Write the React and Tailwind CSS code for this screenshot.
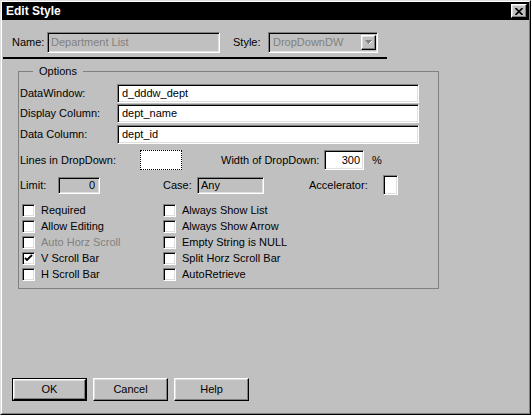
// Edit Style dialog, Win95 look

const sunken =
	'border border-t-[#808080] border-l-[#808080] border-b-white border-r-white shadow-[inset_1px_1px_0_#000,inset_-1px_-1px_0_#dfdfdf]';
const raised =
	'border border-t-white border-l-white border-b-black border-r-black shadow-[inset_-1px_-1px_0_#808080,inset_1px_1px_0_#dfdfdf]';

const leftChecks = [
	{ label: 'Required' },
	{ label: 'Allow Editing' },
	{ label: 'Auto Horz Scroll', disabled: true },
	{ label: 'V Scroll Bar', checked: true },
	{ label: 'H Scroll Bar' },
];

const rightChecks = [
	{ label: 'Always Show List' },
	{ label: 'Always Show Arrow' },
	{ label: 'Empty String is NULL' },
	{ label: 'Split Horz Scroll Bar' },
	{ label: 'AutoRetrieve' },
];

function Check({ label, checked, disabled }) {
	return (
		<div className="flex h-[16px] items-center">
			<div className={`w-[13px] h-[13px] bg-white flex items-center justify-center ${sunken}`}>
				{checked && (
					<svg width="9" height="9" viewBox="0 0 9 9">
						<path d="M1 4 L3 6 L8 1" stroke="#000" strokeWidth="1.8" fill="none" />
					</svg>
				)}
			</div>
			<span className={`ml-[6px] ${disabled ? 'text-[#808080]' : ''}`}>{label}</span>
		</div>
	);
}

function Field({ width, value }) {
	return (
		<div className={`h-[19px] bg-white flex items-center pl-[4px] ${sunken} ${width}`}>
			{value}
		</div>
	);
}

function Button({ children, isDefault }) {
	return (
		<div className={`w-[75px] h-[23px] ${isDefault ? 'border border-black' : ''}`}>
			<div className={`w-full h-full flex items-center justify-center ${raised}`}>{children}</div>
		</div>
	);
}

export default function App() {
	return (
		<div className="w-[531px] h-[415px] border border-t-[#dfdfdf] border-l-[#dfdfdf] border-b-black border-r-black font-['Liberation_Sans',Arial,sans-serif] text-[11px] text-black">
			<div className="w-full h-full bg-[#c0c0c0] border border-t-white border-l-white border-b-[#808080] border-r-[#808080]">
				{/* Title bar */}
				<div className="h-[18px] bg-black flex items-center justify-between">
					<span className="pl-[4px] text-white font-bold text-[12px]">Edit Style</span>
					<div className={`mr-[2px] w-[16px] h-[14px] bg-[#c0c0c0] flex items-center justify-center ${raised}`}>
						<svg width="8" height="7" viewBox="0 0 8 7">
							<path d="M0.5 0 L7.5 7 M7.5 0 L0.5 7" stroke="#000" strokeWidth="1.6" />
						</svg>
					</div>
				</div>

				{/* Name / Style */}
				<div className="mt-[12px] pl-[10px] flex items-center h-[21px]">
					<span className="w-[35px]">Name:</span>
					<div className={`w-[173px] h-[21px] flex items-center pl-[3px] text-[#808080] ${sunken}`}>
						Department List
					</div>
					<span className="ml-[13px] w-[35px]">Style:</span>
					<div className={`w-[110px] h-[21px] flex items-center justify-between pl-[4px] pr-[1px] text-[#808080] ${sunken}`}>
						<span>DropDownDW</span>
						<div className={`w-[15px] h-[15px] flex items-center justify-center ${raised}`}>
							<svg width="7" height="5" viewBox="0 0 7 5">
								<path d="M0 0 H7 L3.5 4 Z" fill="#808080" />
								<path d="M4 4 L7 1" stroke="#fff" strokeWidth="1" />
							</svg>
						</div>
					</div>
				</div>

				<div className="mt-[4px] ml-[1px] w-[384px] h-[2px] bg-black" />

				{/* Options group */}
				<fieldset className="mt-[6px] ml-[16px] w-[421px] h-[224px] border border-[#808080] pl-[1px]">
					<legend className="ml-[13px] px-[6px] leading-[13px]">Options</legend>

					<div className="mt-[6px] flex items-center">
						<span className="w-[97px]">DataWindow:</span>
						<Field width="w-[302px]" value="d_dddw_dept" />
					</div>
					<div className="mt-[1px] flex items-center">
						<span className="w-[97px]">Display Column:</span>
						<Field width="w-[302px]" value="dept_name" />
					</div>
					<div className="mt-[2px] flex items-center">
						<span className="w-[97px]">Data Column:</span>
						<Field width="w-[302px]" value="dept_id" />
					</div>

					<div className="mt-[6px] flex items-center h-[20px]">
						<span className="w-[120px]">Lines in DropDown:</span>
						<div className="w-[42px] h-[20px] bg-white border border-dotted border-black" />
						<span className="ml-[39px] w-[103px] whitespace-nowrap">Width of DropDown:</span>
						<div className={`w-[40px] h-[20px] bg-white flex items-center justify-end pr-[3px] ${sunken}`}>300</div>
						<span className="ml-[8px]">%</span>
					</div>

					<div className="mt-[5px] flex items-center h-[20px]">
						<span className="w-[38px]">Limit:</span>
						<div className={`w-[42px] h-[17px] flex items-center justify-end pr-[4px] ${sunken}`}>0</div>
						<span className="ml-[63px] w-[34px]">Case:</span>
						<div className={`w-[67px] h-[17px] flex items-center pl-[3px] ${sunken}`}>Any</div>
						<span className="ml-[45px] w-[74px]">Accelerator:</span>
						<div className={`w-[15px] h-[20px] bg-white ${sunken}`} />
					</div>

					<div className="mt-[7px] ml-[2px] grid grid-cols-[141px_1fr]">
						<div>
							{leftChecks.map((c) => (
								<Check key={c.label} {...c} />
							))}
						</div>
						<div>
							{rightChecks.map((c) => (
								<Check key={c.label} {...c} />
							))}
						</div>
					</div>
				</fieldset>

				{/* Buttons */}
				<div className="mt-[89px] pl-[10px] flex gap-[6px]">
					<Button isDefault>OK</Button>
					<Button>Cancel</Button>
					<Button>Help</Button>
				</div>
			</div>
		</div>
	);
}
